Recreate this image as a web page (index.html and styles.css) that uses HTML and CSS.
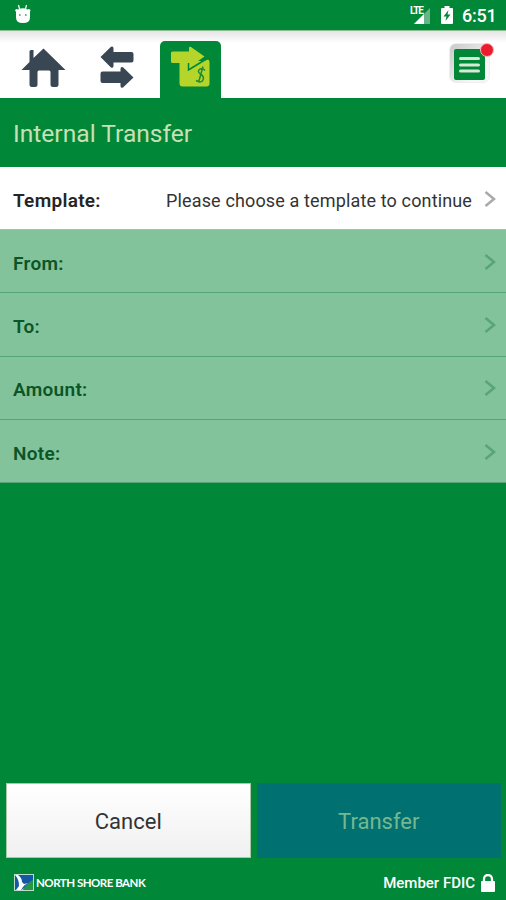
FILE: index.html
```html
<!DOCTYPE html>
<html lang="en">
<head>
<meta charset="utf-8">
<title>Internal Transfer</title>
<link rel="stylesheet" href="styles.css">
</head>
<body>
<div class="app">
  <div class="status">
    <svg class="droid" width="18" height="20" viewBox="0 0 18 20"><path d="M4.500 1l1 4M12.500 1l-1 4" stroke="#fff" stroke-width="1.200"/><path d="M1 6l1.500-1L4 5.500Q9 3 13.500 5.500l1.500-.5L16.500 6 16 8v5.500q0 5.500-7 5.500t-7-5.500V8z" fill="#fff"/><circle cx="5.800" cy="11" r="1" fill="#5cae7c"/><circle cx="11.800" cy="11" r="1" fill="#5cae7c"/></svg>
    <div class="indicators">
      <span class="lte">LTE</span>
      <svg class="signal" width="18" height="17" viewBox="0 0 18 17"><path d="M1 17L17 1v16z" fill="#69b487"/><path d="M1 17L11 7v10z" fill="#fff"/></svg>
      <svg class="battery" width="12" height="18" viewBox="0 0 12 18"><path d="M3.500 2V0h5v2H11q1 0 1 1v14q0 1-1 1H1q-1 0-1-1V3q0-1 1-1z" fill="#fff"/><path d="M7.500 4L2.500 10.500h3L4.500 15l5-6.500h-3z" fill="#008737"/></svg>
      <span class="clock">6:51</span>
    </div>
  </div>
  <div class="nav">
    <svg class="home" width="46" height="42" viewBox="0 0 46 42"><path d="M8.500 4.500q0-1.500 1.500-1.500h2.500v8L22.500 1.500l22 21.500h-7v14.500q0 2.500-2.500 2.500h-3q-2.500 0-2.500-2.500V25q0-1.500-1.500-1.500h-10q-1.500 0-1.500 1.500v12.500q0 2.500-2.500 2.500H11q-2.500 0-2.500-2.500V23H.5l8-8z" fill="#384753"/></svg>
    <svg class="swap" width="36" height="42" viewBox="0 0 36 42"><path d="M.5 11L11 .8q2.500-.8 2.500 1.700V6h18q2 0 2 2v6.500q0 2-2 2h-18V20q0 2.500-2.500 1.500z" fill="#384753"/><path d="M33.500 31.500L23 21.300q-2.500-.8-2.500 1.700v2.500H2.500q-2 0-2 2V35q0 2 2 2h18v3q0 2.500 2.500 1.500z" fill="#384753"/></svg>
    <div class="tab">
      <svg width="42" height="44" viewBox="0 0 42 44"><path d="M9.500 15H34l4-1.500q1.500.5 1.500 2.500v21.500q0 3-3 3h-24q-3 0-3-3z" fill="#b5d52b"/><path d="M2.500 5.500H19V2q0-2 2-1L34.500 10.500 23 18.500h-4V17H2.500Q1 17 1 15.500V7Q1 5.500 2.500 5.500z" fill="#b5d52b"/><path d="M18.500 17v7l4-2.500L38 12" fill="none" stroke="#008737" stroke-width="1.500"/><path d="M35 24.500q-2-2.500-5-1.500-3.500 2.500.5 5t2.500 6-7 .5M33 20.500l-4.500 16" fill="none" stroke="#1b8c35" stroke-width="1.500"/></svg>
    </div>
    <div class="menu">
      <svg width="31" height="31" viewBox="0 0 31 31"><path d="M6.500 9.500h18M6.500 16h18M6.500 22h18" stroke="#d6ead5" stroke-width="3" stroke-linecap="round"/></svg>
      <span class="dot"></span>
    </div>
  </div>
  <h1 class="title">Internal Transfer</h1>
  <div class="row first"><b class="label">Template:</b><span class="value">Please choose a template to continue</span><svg class="chev" width="12" height="18" viewBox="0 0 12 18"><path d="M1.500 2L10 9l-8.500 7"/></svg></div>
  <div class="row"><b class="label">From:</b><svg class="chev" width="12" height="18" viewBox="0 0 12 18"><path d="M1.500 2L10 9l-8.500 7"/></svg></div>
  <div class="row"><b class="label">To:</b><svg class="chev" width="12" height="18" viewBox="0 0 12 18"><path d="M1.500 2L10 9l-8.500 7"/></svg></div>
  <div class="row"><b class="label">Amount:</b><svg class="chev" width="12" height="18" viewBox="0 0 12 18"><path d="M1.500 2L10 9l-8.500 7"/></svg></div>
  <div class="row"><b class="label">Note:</b><svg class="chev" width="12" height="18" viewBox="0 0 12 18"><path d="M1.500 2L10 9l-8.500 7"/></svg></div>
  <div class="actions">
    <button class="btn cancel">Cancel</button>
    <button class="btn transfer">Transfer</button>
  </div>
  <div class="footer">
    <svg width="20" height="17" viewBox="0 0 20 17"><path d="M0 0h20v17H0z" fill="#b9dccb"/><path d="M1 1h18v8L7 16H1z" fill="#1458a8"/><path d="M19 6v10H9q2-6 10-10z" fill="#27954a"/><path d="M1 1h3q4 3 4 7l2 2 4-1q-4 2-5 4l-2 3H2l3-4Q5 5 1 1z" fill="#fff"/></svg>
    <span class="brand">NORTH SHORE BANK</span>
    <span class="fdic">Member FDIC</span>
    <svg class="lock" width="14" height="18" viewBox="0 0 14 18"><path d="M3 8V5a4 4 0 0 1 8 0v3" fill="none" stroke="#fff" stroke-width="2.300"/><rect y="7" width="14" height="11" rx="1" fill="#fff"/></svg>
  </div>
</div>
</body>
</html>
```
FILE: styles.css
```css
* { box-sizing: border-box; }
body { margin: 0; font-family: Roboto, "Liberation Sans", sans-serif; }
.app { width: 506px; height: 900px; background: #008737; display: flex; flex-direction: column; overflow: hidden; }
.status { height: 30px; flex: none; display: flex; justify-content: space-between; padding: 4px 10px 0 14px; color: #fff; }
.indicators { display: flex; align-items: flex-start; }
.lte { font-size: 10px; line-height: 10px; font-weight: 700; letter-spacing: -1px; margin: 2px -10px 0 0; position: relative; z-index: 1; }
.signal { margin: 3px 10px 0 0; }
.battery { margin: 2px 9px 0 0; }
.clock { font-size: 18px; line-height: 24px; font-weight: 500; width: 34px; white-space: nowrap; letter-spacing: -0.2px; }
.nav { height: 68px; flex: none; display: flex; background: linear-gradient(#e4e4e4, #fff 12px); border-top: 1px solid #8dbc90; }
.home { margin: 16px 0 0 21px; }
.swap { margin: 15px 0 0 33px; }
.tab { width: 61px; height: 58px; margin: 10px 0 0 24px; padding: 5px 0 0 10px; background: #008737; border-radius: 5px 5px 0 0; }
.menu { position: relative; width: 41px; height: 40px; margin: 12px 16px 0 auto; padding: 5px 4px; border: 1px solid #eee; border-radius: 7px; background: linear-gradient(135deg, #c9c9c9, #f7f7f7 75%); }
.menu svg { display: block; background: #008737; border-radius: 2px; }
.dot { position: absolute; right: -5px; top: -1px; width: 14px; height: 14px; border-radius: 50%; background: #ed1b2e; border: 1px solid #f6b6b9; }
.title { margin: 0; height: 69px; flex: none; padding: 2px 13px 0; line-height: 68px; font-size: 24.6px; font-weight: 400; color: #c9e0b6; }
.row { height: 63.3px; flex: none; display: flex; align-items: center; padding: 4px 10px 0 13px; background: #82c39b; border-bottom: 1px solid #55a477; color: #0b5527; }
.first { background: #fff; border-color: #aeb9ae; color: #252525; height: 63px; }
.label { font-size: 19px; font-weight: 600; letter-spacing: 0.3px; }
.value { margin-left: auto; font-size: 18px; letter-spacing: 0.14px; color: #333; white-space: nowrap; }
.chev { margin: -3px 0 0 auto; fill: none; stroke: #58a477; stroke-width: 2.5; }
.first .chev { margin-left: 12px; stroke: #aaa; }
.actions { display: flex; gap: 6px; margin-top: auto; padding: 0 5px 0 6px; }
.btn { flex: 1; height: 75px; border: 1px solid #007070; padding: 2px 0 0; font-family: inherit; font-size: 22px; }
.cancel { background: linear-gradient(#fff, #f0f0f0); border-color: #a8c9a8; color: #333; }
.transfer { background: #007070; color: #75b890; }
.footer { height: 42px; flex: none; display: flex; align-items: center; padding: 7px 11px 0 14px; color: #fff; }
.brand { margin-left: 2px; font-family: Lato, sans-serif; font-size: 11.5px; letter-spacing: -0.5px; font-weight: 700; }
.fdic { margin-left: auto; font-size: 15px; font-weight: 500; white-space: nowrap; }
.lock { margin-left: 6px; }
```
